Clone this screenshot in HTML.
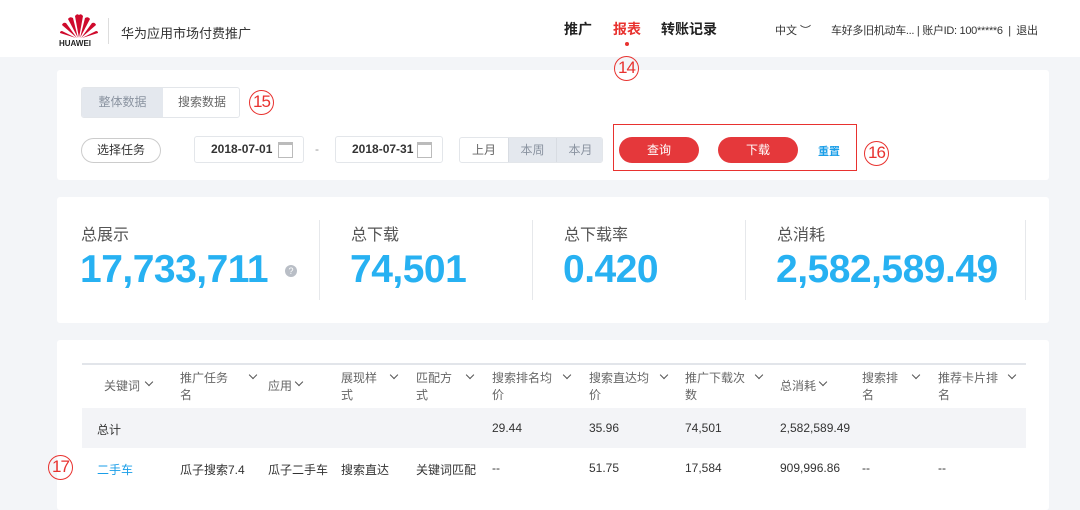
<!DOCTYPE html>
<html><head><meta charset="utf-8"><style>
*{margin:0;padding:0;box-sizing:border-box}
body{width:1080px;height:499px;overflow:hidden;background:#f3f5f8;font-family:"Liberation Sans","Noto Sans CJK SC",sans-serif;color:#333;position:relative}
.a{position:absolute;white-space:nowrap}
.hdr{position:absolute;left:0;top:0;width:1080px;height:57px;background:#fff}
.card{position:absolute;background:#fff;border-radius:3px}
.circ{position:absolute;z-index:5;width:25px;height:25px;border:1.5px solid #e8322f;border-radius:50%;color:#e8322f;font-size:17px;text-align:center;line-height:22px;letter-spacing:-1px}
.pill{position:absolute;border-radius:14px;text-align:center;font-size:12px}
.inp{position:absolute;border:1px solid #e3e6ea;border-radius:3px;height:27px;font-size:12px;font-weight:bold;line-height:25px;padding-left:16px;color:#333}
.cal{position:absolute;right:10px;top:5px;width:15px;height:16px;border:1px solid #bbb;border-top-width:3px}
.lbl{font-size:16px;color:#555}
.big{font-size:39px;font-weight:bold;color:#27b1f2;letter-spacing:-0.5px}
.th{position:absolute;font-size:12px;color:#666;line-height:17px;top:370px}
.td{position:absolute;font-size:12px;color:#333}
.v{position:absolute;width:6px;height:6px;border-right:1.5px solid #555;border-bottom:1.5px solid #555;transform:rotate(45deg)}
</style></head><body>
<div class="hdr">
<svg class="a" style="left:60px;top:13px" width="38" height="26" viewBox="0 0 38 26">
<g fill="#cf0a2c">
<path d="M19 25 L15 3 Q17 0 19 2 Z"/><path d="M19 25 L23 3 Q21 0 19 2 Z"/>
<path d="M18 25 L8 6 Q10 3 13 5 Z"/><path d="M20 25 L30 6 Q28 3 25 5 Z"/>
<path d="M17 25 L2 12 Q3 9 6 10 Z"/><path d="M21 25 L36 12 Q35 9 32 10 Z"/>
<path d="M16 25 L0 20 Q0 18 2 18 Z"/><path d="M22 25 L38 20 Q38 18 36 18 Z"/>
</g></svg>
<div class="a" style="left:59px;top:39px;font-size:8px;font-weight:bold;color:#222">HUAWEI</div>
<div class="a" style="left:108px;top:18px;width:1px;height:26px;background:#ddd"></div>
<div class="a" style="left:121px;top:23px;font-size:13px;color:#333">华为应用市场付费推广</div>
<div class="a" style="left:564px;top:19px;font-size:14px;font-weight:bold;color:#222">推广</div>
<div class="a" style="left:613px;top:19px;font-size:14px;font-weight:bold;color:#e8322f">报表</div>
<div class="a" style="left:625px;top:42px;width:4px;height:4px;border-radius:50%;background:#e8322f"></div>
<div class="a" style="left:661px;top:19px;font-size:14px;font-weight:bold;color:#222">转账记录</div>
<div class="a" style="left:775px;top:22px;font-size:11px;color:#333">中文 ︶</div>
<div class="a" style="left:831px;top:22px;font-size:11px;color:#333;letter-spacing:-0.3px">车好多旧机动车... | 账户ID: 100*****6 &nbsp;| &nbsp;退出</div>
</div>
<div class="circ" style="left:614px;top:56px">14</div>

<div class="card" style="left:57px;top:70px;width:992px;height:110px"></div>
<div class="a" style="left:81px;top:87px;width:159px;height:31px;border:1px solid #e3e6ea;border-radius:3px;overflow:hidden;font-size:12px;color:#666">
<div class="a" style="left:0;top:0;width:81px;height:31px;background:#e4e8ee;text-align:center;line-height:29px;color:#8a93a0">整体数据</div>
<div class="a" style="left:81px;top:0;width:78px;text-align:center;line-height:29px">搜索数据</div></div>
<div class="circ" style="left:249px;top:90px">15</div>
<div class="pill" style="left:81px;top:138px;width:80px;height:25px;border:1px solid #ccc;line-height:23px;color:#333">选择任务</div>
<div class="inp" style="left:194px;top:136px;width:110px">2018-07-01<div class="cal"></div></div>
<div class="a" style="left:315px;top:142px;font-size:12px;color:#999">-</div>
<div class="inp" style="left:335px;top:136px;width:108px">2018-07-31<div class="cal"></div></div>
<div class="a" style="left:459px;top:137px;width:144px;height:26px;border:1px solid #e3e6ea;border-radius:3px;overflow:hidden;font-size:12px;color:#666;line-height:24px">
<div class="a" style="left:0;width:48px;text-align:center">上月</div>
<div class="a" style="left:48px;width:48px;background:#e4e8ee;height:26px;text-align:center;color:#8a93a0;border-left:1px solid #d8dce2">本周</div>
<div class="a" style="left:96px;width:48px;background:#e4e8ee;height:26px;text-align:center;color:#8a93a0;border-left:1px solid #d8dce2">本月</div></div>
<div class="a" style="left:613px;top:124px;width:244px;height:47px;border:1.5px solid #e8322f"></div>
<div class="pill" style="left:619px;top:137px;width:80px;height:26px;background:#e5383b;color:#fff;line-height:26px">查询</div>
<div class="pill" style="left:718px;top:137px;width:80px;height:26px;background:#e5383b;color:#fff;line-height:26px">下载</div>
<div class="a" style="left:818px;top:143px;font-size:11px;color:#1a9ee8;font-weight:bold">重置</div>
<div class="circ" style="left:864px;top:141px">16</div>

<div class="card" style="left:57px;top:197px;width:992px;height:126px"></div>
<div class="a lbl" style="left:81px;top:221px">总展示</div>
<div class="a big" style="left:80px;top:248px">17,733,711</div>
<div class="a" style="left:285px;top:265px;width:12px;height:12px;border-radius:50%;background:#b9bec6;color:#fff;font-size:9px;text-align:center;line-height:12px">?</div>
<div class="a" style="left:319px;top:220px;width:1px;height:80px;background:#e6e8eb"></div>
<div class="a lbl" style="left:351px;top:221px">总下载</div>
<div class="a big" style="left:350px;top:248px">74,501</div>
<div class="a" style="left:532px;top:220px;width:1px;height:80px;background:#e6e8eb"></div>
<div class="a lbl" style="left:564px;top:221px">总下载率</div>
<div class="a big" style="left:563px;top:248px">0.420</div>
<div class="a" style="left:745px;top:220px;width:1px;height:80px;background:#e6e8eb"></div>
<div class="a lbl" style="left:777px;top:221px">总消耗</div>
<div class="a big" style="left:776px;top:248px">2,582,589.49</div>
<div class="a" style="left:1025px;top:220px;width:1px;height:80px;background:#e6e8eb"></div>

<div class="card" style="left:57px;top:340px;width:992px;height:170px"></div>
<div class="a" style="left:82px;top:363px;width:944px;height:2px;background:#e2e5ea"></div>
<div class="a" style="left:82px;top:408px;width:944px;height:40px;background:#f3f4f7"></div>
<div class="th" style="left:104px;top:378px">关键词</div><div class="v" style="left:146px;top:379px"></div>
<div class="th" style="left:180px">推广任务<br>名</div><div class="v" style="left:250px;top:372px"></div>
<div class="th" style="left:268px;top:378px">应用</div><div class="v" style="left:296px;top:379px"></div>
<div class="th" style="left:341px">展现样<br>式</div><div class="v" style="left:391px;top:372px"></div>
<div class="th" style="left:416px">匹配方<br>式</div><div class="v" style="left:467px;top:372px"></div>
<div class="th" style="left:492px">搜索排名均<br>价</div><div class="v" style="left:564px;top:372px"></div>
<div class="th" style="left:589px">搜索直达均<br>价</div><div class="v" style="left:661px;top:372px"></div>
<div class="th" style="left:685px">推广下载次<br>数</div><div class="v" style="left:756px;top:372px"></div>
<div class="th" style="left:780px;top:378px">总消耗</div><div class="v" style="left:820px;top:379px"></div>
<div class="th" style="left:862px">搜索排<br>名</div><div class="v" style="left:913px;top:372px"></div>
<div class="th" style="left:938px">推荐卡片排<br>名</div><div class="v" style="left:1009px;top:372px"></div>
<div class="td" style="left:97px;top:421px">总计</div>
<div class="td" style="left:492px;top:421px">29.44</div>
<div class="td" style="left:589px;top:421px">35.96</div>
<div class="td" style="left:685px;top:421px">74,501</div>
<div class="td" style="left:780px;top:421px">2,582,589.49</div>
<div class="td" style="left:97px;top:461px;color:#1a9ee8">二手车</div>
<div class="td" style="left:180px;top:461px">瓜子搜索7.4</div>
<div class="td" style="left:268px;top:461px">瓜子二手车</div>
<div class="td" style="left:341px;top:461px">搜索直达</div>
<div class="td" style="left:416px;top:461px">关键词匹配</div>
<div class="td" style="left:492px;top:461px">--</div>
<div class="td" style="left:589px;top:461px">51.75</div>
<div class="td" style="left:685px;top:461px">17,584</div>
<div class="td" style="left:780px;top:461px">909,996.86</div>
<div class="td" style="left:862px;top:461px">--</div>
<div class="td" style="left:938px;top:461px">--</div>
<div class="circ" style="left:48px;top:455px">17</div>
</body></html>
